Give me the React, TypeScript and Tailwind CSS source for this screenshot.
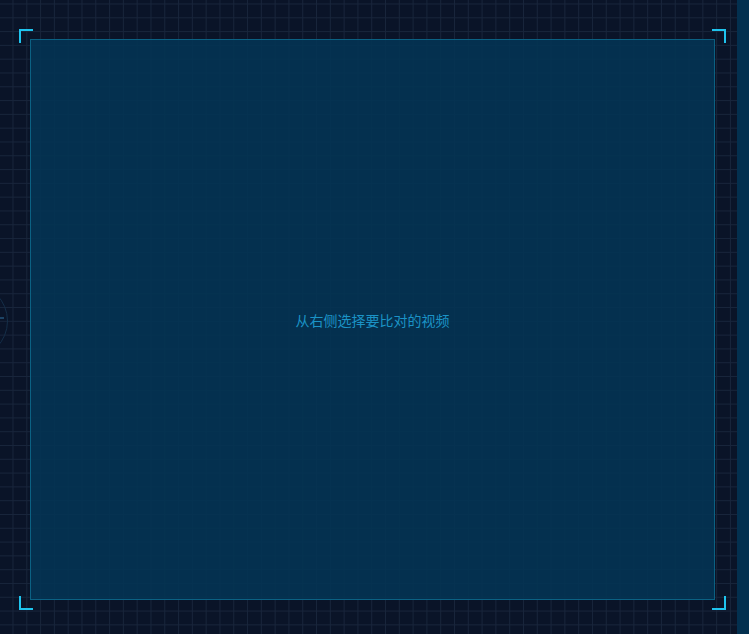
export default function App() {
  return (
    <div className="relative flex h-[634px] w-[749px] overflow-hidden bg-[#0a1428] font-['Noto_Sans_CJK_SC',sans-serif]">
      {/* grid backdrop */}
      <div className="flex-1 bg-[linear-gradient(#18253b_1px,transparent_1px),linear-gradient(90deg,#18253b_1px,transparent_1px)] bg-[size:13.8px_13.8px] bg-[position:12.5px_3.5px] pl-[19px] pr-[11px] pt-[29px] pb-[24px]">
        <div className="relative h-full px-[11px] py-[10px]">
          {/* corner brackets */}
          <span className="absolute left-0 top-0 h-[14px] w-[14px] border-l-2 border-t-2 border-[#1fc4ee]" />
          <span className="absolute right-0 top-0 h-[14px] w-[14px] border-r-2 border-t-2 border-[#1fc4ee]" />
          <span className="absolute bottom-0 left-0 h-[14px] w-[14px] border-b-2 border-l-2 border-[#1fc4ee]" />
          <span className="absolute bottom-0 right-0 h-[14px] w-[14px] border-b-2 border-r-2 border-[#1fc4ee]" />

          <div className="flex h-full items-center justify-center border border-[#0b6183] bg-[rgba(3,52,84,0.88)]">
            <span className="text-[14px] leading-none text-[#1b93c6]">从右侧选择要比对的视频</span>
          </div>
        </div>
      </div>

      {/* right side strip */}
      <div className="w-[12px] bg-[#03304f]" />

      {/* faint collapse handle on the left edge */}
      <div className="absolute left-[-68px] top-[283px] h-[76px] w-[76px] rounded-full border border-[#142e48]" />
      <div className="absolute left-0 top-[317px] h-[2px] w-[4px] bg-[#1d4466]" />
    </div>
  );
}
